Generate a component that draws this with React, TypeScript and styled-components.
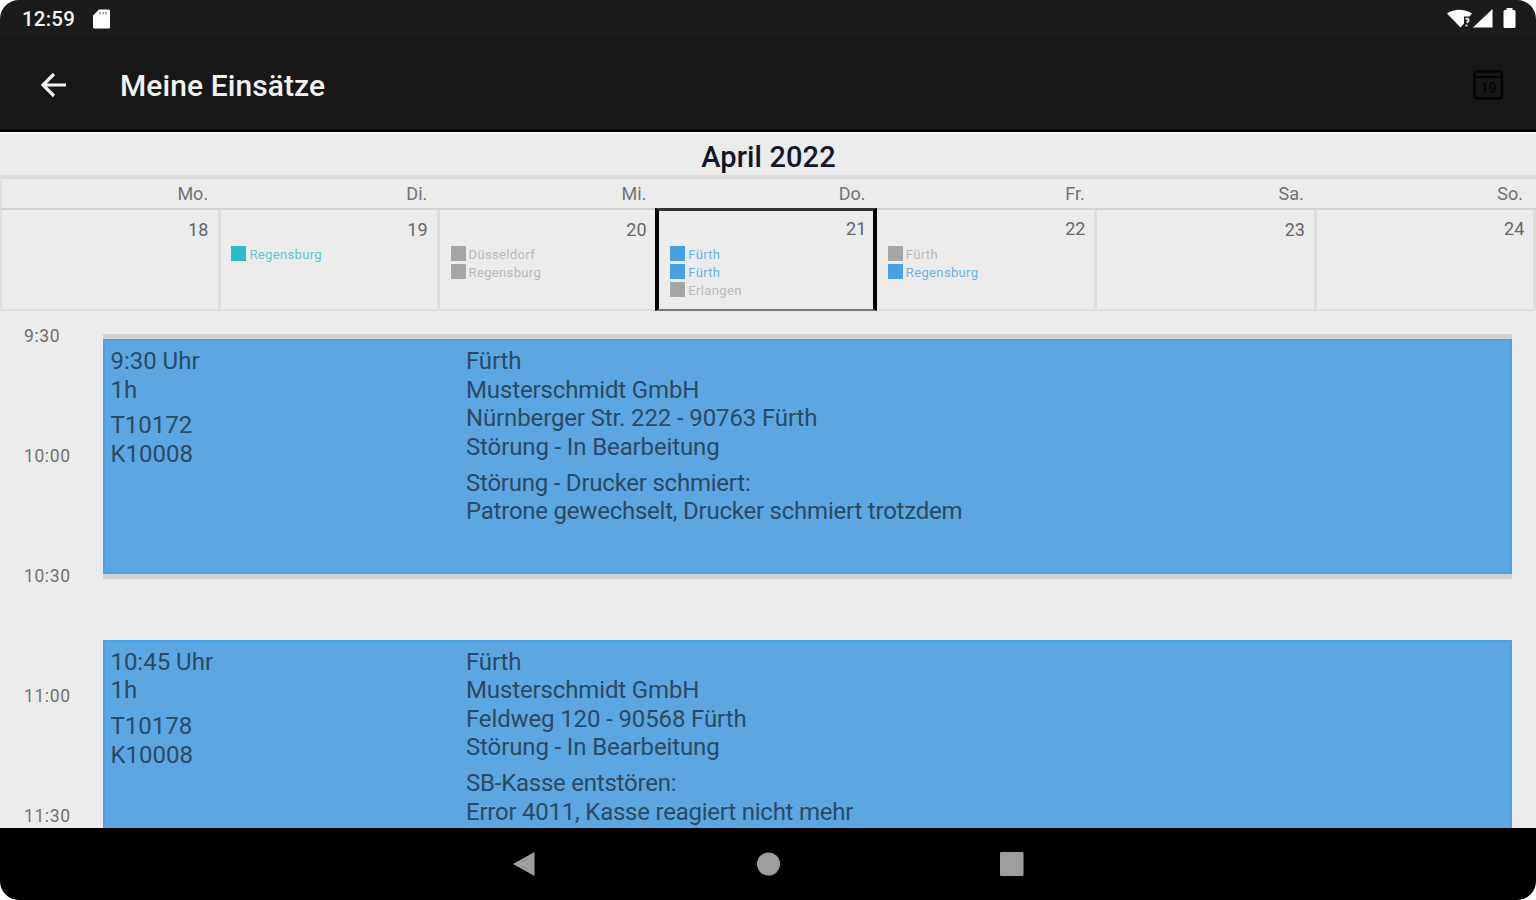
import React from "react";
import styled, { createGlobalStyle } from "styled-components";

const GlobalStyle = createGlobalStyle`
  * { box-sizing: border-box; }
  html, body { margin: 0; padding: 0; background: #fff; }
  body { font-family: Roboto, "Liberation Sans", sans-serif; overflow: hidden; }
`;

const Device = styled.div`
  width: 1536px;
  height: 900px;
  display: flex;
  flex-direction: column;
  overflow: hidden;
  border-radius: 19px;
  background: #ececec;
`;

const StatusBar = styled.header`
  height: 37px;
  flex: none;
  display: flex;
  align-items: center;
  justify-content: space-between;
  padding: 0 19px 0 22px;
  background: #1b1b1b;
  color: #f4f4f4;
`;

const StatusGroup = styled.div<{ $gap: number }>`
  display: flex;
  align-items: center;
  gap: ${(p) => p.$gap}px;
`;

const Clock = styled.span`
  padding-top: 1px;
  font-size: 20.5px;
  font-weight: 500;
  line-height: 36px;
  letter-spacing: 0.2px;
`;

const AppBar = styled.div`
  height: 95px;
  flex: none;
  display: flex;
  align-items: center;
  padding: 4px 32px 0 40px;
  background: #171717;
  border-bottom: 3px solid #000;
`;

const AppTitle = styled.h1`
  margin: 2px 0 0 52px;
  flex: 1;
  font-size: 30px;
  font-weight: 500;
  line-height: 34px;
  letter-spacing: 0.08px;
  color: #f2f2f2;
`;

const MonthTitle = styled.h2`
  height: 43px;
  flex: none;
  margin: 0;
  padding-top: 2px;
  padding-left: 1px;
  text-align: center;
  font-size: 29px;
  font-weight: 500;
  line-height: 43px;
  letter-spacing: 0.1px;
  color: #15152a;
  border-top: 2px solid #f8f8f8;
`;

const WeekdayRow = styled.div`
  height: 35px;
  flex: none;
  display: grid;
  grid-template-columns: repeat(7, 1fr);
  border-top: 4px solid #dcdcdc;
  border-bottom: 2px solid #d2d2d2;
  border-left: 2px solid #e0e0e0;
`;

const Weekday = styled.div`
  padding-right: 13px;
  text-align: right;
  font-size: 18px;
  line-height: 30px;
  color: #737373;
`;

const DayRow = styled.div`
  height: 101px;
  flex: none;
  display: grid;
  grid-template-columns: 221px 219.2px 218.1px 219.2px 219.6px 219.5px 219.4px;
`;

const DayCell = styled.div<{ $selected?: boolean; $first?: boolean; $inset: number }>`
  margin: ${(p) => (p.$selected ? "-2px 0 0 -3px" : "0")};
  padding: ${(p) => (p.$selected ? "7px 7px 0 11px" : `8px ${p.$inset}px 0 10.400px`)};
  border-style: solid;
  border-color: ${(p) => (p.$selected ? "#333 #000 #777 #000" : "#dedede")};
  border-width: ${(p) => (p.$selected ? "3px 4px 2px 4px" : "0 3px 2px 0")};
  border-left: ${(p) => (p.$first ? "2px solid #e0e0e0" : "")};
  position: ${(p) => (p.$selected ? "relative" : "static")};
`;

const DayNumber = styled.div<{ $raised?: boolean }>`
  height: 26px;
  padding-top: ${(p) => (p.$raised ? 0 : 1)}px;
  text-align: right;
  font-size: 18px;
  line-height: 22px;
  letter-spacing: 0.1px;
  color: #666;
`;

const Entry = styled.div<{ $color: string }>`
  height: 18px;
  display: flex;
  align-items: center;
  gap: 3px;
  font-size: 13px;
  line-height: 17px;
  letter-spacing: 0.35px;
  color: ${(p) => p.$color};
`;

const Swatch = styled.span<{ $color: string }>`
  width: 15px;
  height: 15px;
  flex: none;
  background: ${(p) => p.$color};
`;

const Place = styled.span`
  padding-top: 2px;
`;

const Timeline = styled.main`
  flex: 1;
  min-height: 0;
  display: grid;
  grid-template-columns: 103px 1fr;
  padding-right: 24px;
  overflow: hidden;
`;

const HourColumn = styled.div`
  padding: 14px 0 0 24px;
`;

const HourLabel = styled.div`
  height: 120px;
  font-size: 17.5px;
  line-height: 22px;
  letter-spacing: 0.6px;
  color: #707070;
`;

const Track = styled.div`
  padding-top: 23px;
`;

const HourLine = styled.div`
  height: 5px;
  background: #d2d1d0;
`;

const Appointment = styled.article<{ $gapBefore: number }>`
  height: 235px;
  margin-top: ${(p) => p.$gapBefore}px;
  display: grid;
  grid-template-columns: 355.6px 1fr;
  padding: 6px 6px 0 5.4px;
  border: 2px solid #4aa2e2;
  background: #5ca7e2;
  font-size: 24px;
  line-height: 28.6px;
  color: #2b4962;
`;

const Block = styled.div<{ $tracking: number }>`
  margin-bottom: 7.3px;
  letter-spacing: ${(p) => p.$tracking}px;
`;

const NavBar = styled.nav`
  height: 72px;
  flex: none;
  display: flex;
  justify-content: center;
  align-items: center;
  gap: 219px;
  background: #000;
`;

const TEAL = "#2bbccb";
const BLUE = "#489fe2";
const GRAY = "#a6a6a6";

type DayEntry = { place: string; color: string; ink: string };
type Day = { name: string; date: number; entries: DayEntry[]; selected?: boolean; raised?: boolean };

const teal = (place: string): DayEntry => ({ place, color: TEAL, ink: "#5cc8d2" });
const blue = (place: string): DayEntry => ({ place, color: BLUE, ink: "#6db1e6" });
const gray = (place: string): DayEntry => ({ place, color: GRAY, ink: "#b9b9b9" });

const days: Day[] = [
  { name: "Mo.", date: 18, entries: [] },
  { name: "Di.", date: 19, entries: [teal("Regensburg")] },
  { name: "Mi.", date: 20, entries: [gray("Düsseldorf"), gray("Regensburg")] },
  { name: "Do.", date: 21, entries: [blue("Fürth"), blue("Fürth"), gray("Erlangen")], selected: true, raised: true },
  { name: "Fr.", date: 22, entries: [gray("Fürth"), blue("Regensburg")], raised: true },
  { name: "Sa.", date: 23, entries: [] },
  { name: "So.", date: 24, entries: [], raised: true },
];

const hours = ["9:30", "10:00", "10:30", "11:00", "11:30"];

type Job = { gapBefore: number; time: string[]; ids: string[]; customer: string[]; notes: string[] };

const jobs: Job[] = [
  {
    gapBefore: 0,
    time: ["9:30 Uhr", "1h"],
    ids: ["T10172", "K10008"],
    customer: ["Fürth", "Musterschmidt GmbH", "Nürnberger Str. 222 - 90763 Fürth", "Störung - In Bearbeitung"],
    notes: ["Störung - Drucker schmiert:", "Patrone gewechselt, Drucker schmiert trotzdem"],
  },
  {
    gapBefore: 60.5,
    time: ["10:45 Uhr", "1h"],
    ids: ["T10178", "K10008"],
    customer: ["Fürth", "Musterschmidt GmbH", "Feldweg 120 - 90568 Fürth", "Störung - In Bearbeitung"],
    notes: ["SB-Kasse entstören:", "Error 4011, Kasse reagiert nicht mehr"],
  },
];

const Lines = ({ items, tracking = 0 }: { items: string[]; tracking?: number }) => (
  <Block $tracking={tracking}>
    {items.map((t) => (
      <div key={t}>{t}</div>
    ))}
  </Block>
);

const JobCard = ({ job }: { job: Job }) => (
  <Appointment $gapBefore={job.gapBefore}>
    <div>
      <Lines items={job.time} />
      <Lines items={job.ids} />
    </div>
    <div>
      <Lines items={job.customer} tracking={-0.13} />
      <Lines items={job.notes} tracking={-0.23} />
    </div>
  </Appointment>
);

const SdCardIcon = () => (
  <svg width="20" height="20" viewBox="0 0 20 20">
    <path d="M7 .5h9.500q1.500 0 1.500 1.500v16q0 1.500-1.500 1.500h-14Q1 19.500 1 18V6.500z" fill="#fff" />
    <path d="M8 3v2.500M11 3v2.500M14 3v2.500" stroke="#999" strokeWidth="1.600" />
  </svg>
);

const WifiIcon = () => (
  <svg width="26" height="20" viewBox="0 0 26 20">
    <path d="M0 4.500Q12 -3 25 4.500L22.500 7.500H17v7L13.500 18.500z" fill="#fff" />
    <path d="M18.500 10.500q2.500-2 3 0t-2 3M19.500 15.500v2" stroke="#ddd" strokeWidth="2" fill="none" />
  </svg>
);

const SignalIcon = () => (
  <svg width="20" height="20" viewBox="0 0 20 20">
    <path d="M19.500 0v18.500H0z" fill="#fff" />
  </svg>
);

const BatteryIcon = () => (
  <svg width="15" height="21" viewBox="0 0 15 21">
    <path d="M4.500 0h6v2H12q1.500 0 1.500 1.500v15Q13.500 20 12 20H3q-1.500 0-1.500-1.500v-15Q1.500 2 3 2h1.500z" fill="#fff" />
  </svg>
);

const BackIcon = () => (
  <svg width="28" height="26" viewBox="0 0 28 26">
    <path d="M26 13H3M14 2L3 13l11 11" fill="none" stroke="#f2f2f2" strokeWidth="3.200" />
  </svg>
);

const TodayIcon = () => (
  <svg width="31" height="31" viewBox="0 0 31 31">
    <rect x="1.500" y="1.500" width="27.500" height="27" rx="3" fill="none" stroke="#040404" strokeWidth="2.400" />
    <path d="M2 7h27" stroke="#040404" strokeWidth="2" />
    <text x="15.500" y="23" textAnchor="middle" fontFamily="Roboto, sans-serif" fontSize="14" fontWeight="700" fill="#070707">
      19
    </text>
  </svg>
);

const NavBack = () => (
  <svg width="26" height="26" viewBox="0 0 26 26">
    <path d="M3 13L24.500 1v24z" fill="#9d9d9d" />
  </svg>
);

const NavHome = () => (
  <svg width="26" height="26" viewBox="0 0 26 26">
    <circle cx="13.500" cy="13" r="11.500" fill="#9d9d9d" />
  </svg>
);

const NavRecent = () => (
  <svg width="26" height="26" viewBox="0 0 26 26">
    <rect x="0" y="1" width="23.500" height="24" rx="1" fill="#9d9d9d" />
  </svg>
);

export default function App() {
  return (
    <>
      <GlobalStyle />
      <Device>
        <StatusBar>
          <StatusGroup $gap={17}>
            <Clock>12:59</Clock>
            <SdCardIcon />
          </StatusGroup>
          <StatusGroup $gap={9}>
            <StatusGroup $gap={0}>
              <WifiIcon />
              <SignalIcon />
            </StatusGroup>
            <BatteryIcon />
          </StatusGroup>
        </StatusBar>
        <AppBar>
          <BackIcon />
          <AppTitle>Meine Einsätze</AppTitle>
          <TodayIcon />
        </AppBar>
        <MonthTitle>April 2022</MonthTitle>
        <WeekdayRow>
          {days.map((d) => (
            <Weekday key={d.name}>{d.name}</Weekday>
          ))}
        </WeekdayRow>
        <DayRow>
          {days.map((d, i) => (
            <DayCell key={d.date} $selected={d.selected} $first={i === 0} $inset={i < 2 ? 9.5 : 8.5}>
              <DayNumber $raised={d.raised}>{d.date}</DayNumber>
              {d.entries.map((e, n) => (
                <Entry key={n} $color={e.ink}>
                  <Swatch $color={e.color} />
                  <Place>{e.place}</Place>
                </Entry>
              ))}
            </DayCell>
          ))}
        </DayRow>
        <Timeline>
          <HourColumn>
            {hours.map((h) => (
              <HourLabel key={h}>{h}</HourLabel>
            ))}
          </HourColumn>
          <Track>
            <HourLine />
            <JobCard job={jobs[0]} />
            <HourLine />
            <JobCard job={jobs[1]} />
          </Track>
        </Timeline>
        <NavBar>
          <NavBack />
          <NavHome />
          <NavRecent />
        </NavBar>
      </Device>
    </>
  );
}
